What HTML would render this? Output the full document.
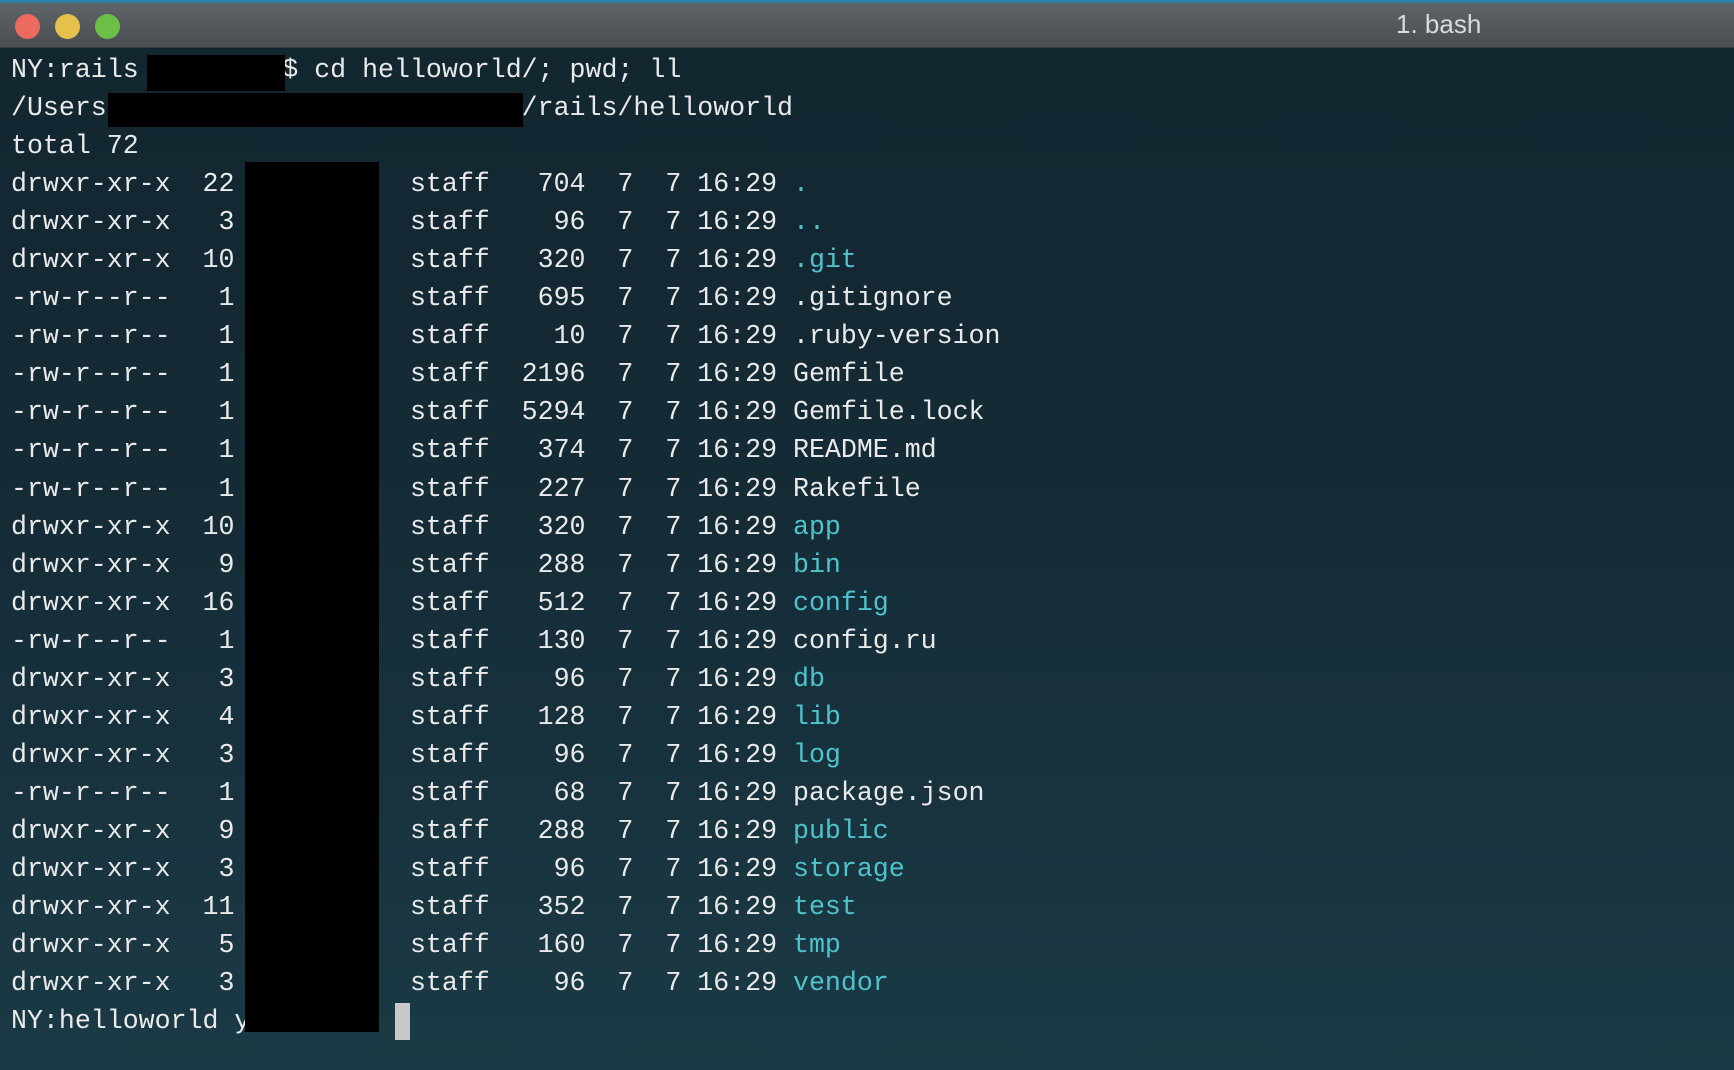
<!DOCTYPE html>
<html><head><style>
html,body{margin:0;padding:0;}
body{width:1734px;height:1070px;overflow:hidden;position:relative;
background:linear-gradient(180deg,#12262f 0%,#142a35 40%,#18333e 75%,#1b3a45 100%);
font-family:"Liberation Mono",monospace;}
.tb{position:absolute;left:0;top:0;width:1734px;height:48px;
background:linear-gradient(180deg,#5f6469 0%,#4a4e52 100%);border-top:3px solid #2f7fa8;box-sizing:border-box;border-bottom:1px solid #3a3d40;}
.dot{position:absolute;top:11px;width:25px;height:25px;border-radius:50%;}
.title{position:absolute;left:0;width:100%;top:0;height:48px;line-height:48px;color:#d8dadc;font-family:"Liberation Sans",sans-serif;font-size:26px;}
pre{position:absolute;left:11px;top:51px;margin:0;font-size:26.6px;line-height:38.05px;color:#eaeaea;font-family:"Liberation Mono",monospace;}
.c{color:#4fc3cc;}
.blk{position:absolute;background:#000;}
</style></head><body>
<div class="tb">
<div class="dot" style="left:15px;background:#ed6a5e"></div>
<div class="dot" style="left:55px;background:#e6c04d"></div>
<div class="dot" style="left:95px;background:#6cc048"></div>
<div class="title"><span style="position:absolute;left:1396px;top:-3px">1. bash</span></div>
</div>
<pre>NY:rails         $ cd helloworld/; pwd; ll
/Users/                         /rails/helloworld
total 72
drwxr-xr-x  22           staff   704  7  7 16:29 <span class="c">.</span>
drwxr-xr-x   3           staff    96  7  7 16:29 <span class="c">..</span>
drwxr-xr-x  10           staff   320  7  7 16:29 <span class="c">.git</span>
-rw-r--r--   1           staff   695  7  7 16:29 .gitignore
-rw-r--r--   1           staff    10  7  7 16:29 .ruby-version
-rw-r--r--   1           staff  2196  7  7 16:29 Gemfile
-rw-r--r--   1           staff  5294  7  7 16:29 Gemfile.lock
-rw-r--r--   1           staff   374  7  7 16:29 README.md
-rw-r--r--   1           staff   227  7  7 16:29 Rakefile
drwxr-xr-x  10           staff   320  7  7 16:29 <span class="c">app</span>
drwxr-xr-x   9           staff   288  7  7 16:29 <span class="c">bin</span>
drwxr-xr-x  16           staff   512  7  7 16:29 <span class="c">config</span>
-rw-r--r--   1           staff   130  7  7 16:29 config.ru
drwxr-xr-x   3           staff    96  7  7 16:29 <span class="c">db</span>
drwxr-xr-x   4           staff   128  7  7 16:29 <span class="c">lib</span>
drwxr-xr-x   3           staff    96  7  7 16:29 <span class="c">log</span>
-rw-r--r--   1           staff    68  7  7 16:29 package.json
drwxr-xr-x   9           staff   288  7  7 16:29 <span class="c">public</span>
drwxr-xr-x   3           staff    96  7  7 16:29 <span class="c">storage</span>
drwxr-xr-x  11           staff   352  7  7 16:29 <span class="c">test</span>
drwxr-xr-x   5           staff   160  7  7 16:29 <span class="c">tmp</span>
drwxr-xr-x   3           staff    96  7  7 16:29 <span class="c">vendor</span>
NY:helloworld y</pre>
<div class="blk" style="left:147px;top:55px;width:138px;height:36px"></div>
<div class="blk" style="left:108px;top:93px;width:415px;height:34px"></div>
<div class="blk" style="left:245px;top:162px;width:134px;height:870px"></div>
<div style="position:absolute;left:395px;top:1003px;width:15px;height:37px;background:#c8c8c8"></div>
</body></html>
